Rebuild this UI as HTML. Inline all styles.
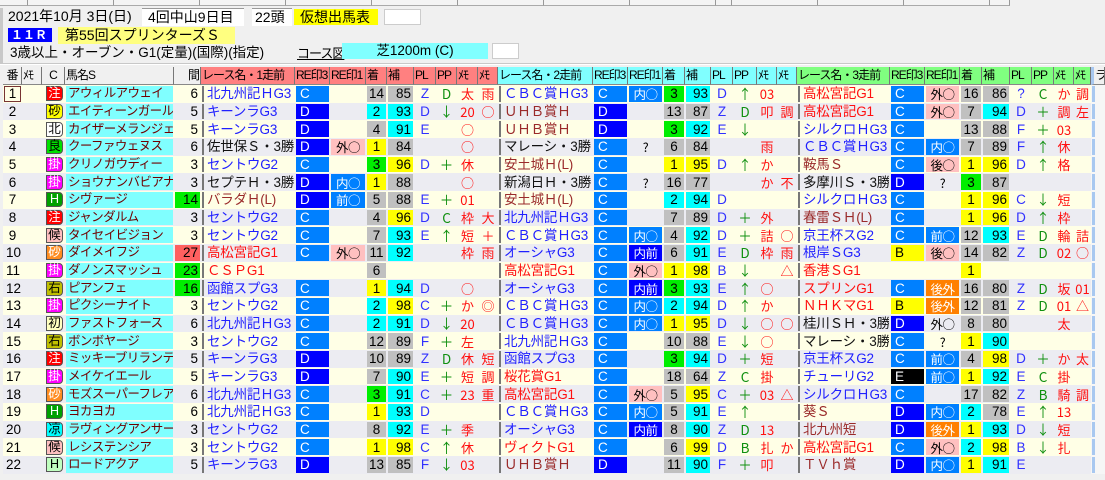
<!DOCTYPE html>
<html><head><meta charset="utf-8">
<style>
*{margin:0;padding:0;box-sizing:border-box}
body{width:1105px;height:480px;overflow:hidden;background:#f0f0f0;font-family:"Liberation Sans","Noto Sans CJK JP",sans-serif;font-size:13px;color:#000;position:relative}
.ab{position:absolute;white-space:nowrap;line-height:17px}
.tb{position:absolute;top:0;height:6px;border-right:1px solid #999;border-bottom:1px solid #aaa;background:#f4f4f4}
table{position:absolute;left:3px;top:67px;border-collapse:separate;border-spacing:0;table-layout:fixed;width:1102px}
td{border:1px solid transparent;background-clip:padding-box;padding:0 2px;white-space:nowrap;overflow:hidden;line-height:15px;font-size:13.5px;height:17.68px}
tr.h td{height:18px;border:0;border-right:1px solid #777;border-bottom:1px solid #888;background:#f0f0f0;font-size:12px;padding:0 1px;letter-spacing:-1px}
tr.h td.h1{background:#ff8080}tr.h td.h2{background:#80ffff}tr.h td.h3{background:#80ff80}
tr.o{background:#ffffe6}tr.e{background:#ececf2}
.ce{text-align:center}.r{text-align:right}
.nm{background-color:#80ffff;color:#700000;font-size:12.5px;letter-spacing:-0.6px}
.rn{box-shadow:inset 2px 0 #777;padding-left:5px;letter-spacing:-0.2px}
.bl{color:#2020ff}.rd{color:#ff1010}.br{color:#9a2a2a}.bk{color:#111}
.c0{background-color:#0080ff;color:#fff;padding-left:4px}
.d0{background-color:#0000ff;color:#fff;padding-left:4px}
.b0{background-color:#ffff00;padding-left:4px}
.e0{background-color:#000;color:#fff;padding-left:4px}
.po,.lb,.db,.or,.q{font-family:"Noto Sans CJK JP",sans-serif;font-size:12.5px;letter-spacing:-0.5px;padding:0}
.po{background-color:#ffc0c0;text-align:center}
.lb{background-color:#0080ff;color:#fff;text-align:center}
.db{background-color:#0000ff;color:#fff;text-align:center}
.or{background-color:#ff8000;color:#fff;text-align:center}
.q{text-align:center}
.y{background-color:#ffff00}.cy{background-color:#00ffff}.g{background-color:#00ee00}.gr{background-color:#c0c0c0}.rr{background-color:#ff6060}
.pl{color:#3030ff;text-align:center}.pp{color:#109010;text-align:center;font-family:"Noto Sans CJK JP",sans-serif}.m{color:#ff1010;text-align:center;font-family:"Noto Sans CJK JP",sans-serif;font-size:13px;padding:0}
.mk{display:inline-block;width:17px;height:15px;border:1px solid #555;border-radius:0 4px 4px 0;text-align:center;line-height:13px;font-size:12.5px;vertical-align:top;margin-left:1px}
.last{background:#f6f6f6;box-shadow:inset 3px 0 #a8c8f0}
</style></head><body>
<div class="tb" style="left:0;width:28px"></div><div class="tb" style="left:28px;width:86px"></div><div class="tb" style="left:114px;width:86px"></div><div class="tb" style="left:200px;width:86px"></div><div class="tb" style="left:286px;width:86px"></div><div class="tb" style="left:372px;width:86px"></div><div class="tb" style="left:458px;width:86px"></div><div class="tb" style="left:544px;width:86px"></div><div class="tb" style="left:630px;width:86px"></div><div class="tb" style="left:716px;width:16px"></div><div class="tb" style="left:732px;width:86px"></div><div class="tb" style="left:818px;width:86px"></div><div class="tb" style="left:904px;width:86px"></div><div class="tb" style="left:990px;width:20px"></div>
<div style="position:absolute;left:0;top:8px;width:3px;height:55px;background:#c8c8c8"></div>
<div class="ab" style="left:8px;top:8px;font-size:14px">2021年10月 3日(日)</div>
<div class="ab" style="left:142px;top:8px;width:102px;height:18px;background:#fff;border-top:1px solid #999;padding-left:6px;font-size:14px">4回中山9日目</div>
<div class="ab" style="left:252px;top:8px;width:40px;height:18px;background:#fff;border-top:1px solid #999;padding-left:3px;font-size:14px">22頭</div>
<div class="ab" style="left:294px;top:9px;width:84px;height:16px;background:#ffff00;padding-left:6px;font-size:14px">仮想出馬表</div>
<div class="ab" style="left:384px;top:9px;width:37px;height:16px;background:#fff;border:1px solid #ccc"></div>
<div class="ab" style="left:8px;top:28px;width:44px;height:14px;background:#0000ff;color:#fff;font-size:12px;line-height:14px;letter-spacing:0;padding-left:3px;font-weight:bold">１１Ｒ</div>
<div class="ab" style="left:58px;top:27px;width:177px;height:17px;background:#ffff80;padding-left:7px;font-size:14px">第55回スプリンターズＳ</div>
<div class="ab" style="left:10px;top:44px;font-size:13.5px">3歳以上・オーブン・G1(定量)(国際)(指定)</div>
<div class="ab" style="left:297px;top:45px;font-size:13px;text-decoration:underline;letter-spacing:-1px">コース図</div>
<div class="ab" style="left:342px;top:43px;width:146px;height:16px;background:#80ffff;text-align:center;font-size:13.5px;line-height:16px">芝1200m (C)</div>
<div class="ab" style="left:492px;top:43px;width:27px;height:16px;background:#fff;border:1px solid #ccc"></div>
<div style="position:absolute;left:0;top:63px;width:1105px;height:2px;background:#c8c8c8;border-bottom:1px solid #fff"></div>
<table>
<colgroup><col style="width:19px"><col style="width:20px"><col style="width:23px"><col style="width:109px"><col style="width:27px">
<col style="width:94px"><col style="width:35px"><col style="width:36px"><col style="width:21px"><col style="width:27px"><col style="width:22px"><col style="width:21px"><col style="width:21px"><col style="width:20px">
<col style="width:95px"><col style="width:35px"><col style="width:35px"><col style="width:22px"><col style="width:26px"><col style="width:22px"><col style="width:24px"><col style="width:20px"><col style="width:20px">
<col style="width:93px"><col style="width:35px"><col style="width:35px"><col style="width:22px"><col style="width:28px"><col style="width:22px"><col style="width:22px"><col style="width:20px"><col style="width:17px">
<col style="width:14px"></colgroup>
<tr class="h"><td class="ce">番</td><td>ﾒﾓ</td><td class="ce">C</td><td>馬名S</td><td class="r">間</td>
<td class="h1">レース名・1走前</td><td class="h1">RE印3</td><td class="h1">RE印1</td><td class="h1">着</td><td class="h1">補</td><td class="h1">PL</td><td class="h1">PP</td><td class="h1">ﾒﾓ</td><td class="h1">ﾒﾓ</td>
<td class="h2">レース名・2走前</td><td class="h2">RE印3</td><td class="h2">RE印1</td><td class="h2">着</td><td class="h2">補</td><td class="h2">PL</td><td class="h2">PP</td><td class="h2">ﾒﾓ</td><td class="h2">ﾒﾓ</td>
<td class="h3">レース名・3走前</td><td class="h3">RE印3</td><td class="h3">RE印1</td><td class="h3">着</td><td class="h3">補</td><td class="h3">PL</td><td class="h3">PP</td><td class="h3">ﾒﾓ</td><td class="h3">ﾒﾓ</td><td style="border-left:3px solid #a8c8f0">ラ</td></tr>

<tr class="o"><td class="ce" style="outline:1px solid #733;outline-offset:-2px">1</td><td></td><td><span class="mk" style="background:#f00;color:#fff">注</span></td><td class="nm">アウィルアウェイ</td><td class="r">6</td>
<td class="rn bl">北九州記ＨG3</td><td class="c0">C</td><td></td><td class="gr ce">14</td><td class="gr r">85</td><td class="pl">Z</td><td class="pp">D</td><td class="m">太</td><td class="m">雨</td>
<td class="rn bl">ＣＢＣ賞ＨG3</td><td class="c0">C</td><td class="lb">内○</td><td class="g ce">3</td><td class="cy r">93</td><td class="pl">D</td><td class="pp">↑</td><td class="m">03</td><td class="m"></td>
<td class="rn rd">高松宮記G1</td><td class="c0">C</td><td class="po">外○</td><td class="gr ce">16</td><td class="gr r">86</td><td class="pl">?</td><td class="pp">C</td><td class="m">か</td><td class="m">調</td><td class="last"></td></tr>

<tr class="e"><td class="ce">2</td><td></td><td><span class="mk" style="background:#ff0">砂</span></td><td class="nm">エイティーンガール</td><td class="r">5</td>
<td class="rn bl">キーンラG3</td><td class="d0">D</td><td></td><td class="cy ce">2</td><td class="cy r">93</td><td class="pl">D</td><td class="pp">↓</td><td class="m">20</td><td class="m">○</td>
<td class="rn br">ＵＨＢ賞Ｈ</td><td class="d0">D</td><td></td><td class="gr ce">13</td><td class="gr r">87</td><td class="pl">Z</td><td class="pp">D</td><td class="m">叩</td><td class="m">調</td>
<td class="rn rd">高松宮記G1</td><td class="c0">C</td><td class="po">外○</td><td class="gr ce">7</td><td class="cy r">94</td><td class="pl">D</td><td class="pp">＋</td><td class="m">調</td><td class="m">左</td><td class="last"></td></tr>

<tr class="o"><td class="ce">3</td><td></td><td><span class="mk" style="background:#fff">北</span></td><td class="nm">カイザーメランジェ</td><td class="r">5</td>
<td class="rn bl">キーンラG3</td><td class="d0">D</td><td></td><td class="gr ce">4</td><td class="cy r">91</td><td class="pl">E</td><td class="pp"></td><td class="m">○</td><td class="m"></td>
<td class="rn br">ＵＨＢ賞Ｈ</td><td class="d0">D</td><td></td><td class="g ce">3</td><td class="cy r">92</td><td class="pl">E</td><td class="pp">↓</td><td class="m"></td><td class="m"></td>
<td class="rn bl">シルクロＨG3</td><td class="c0">C</td><td></td><td class="gr ce">13</td><td class="gr r">88</td><td class="pl">F</td><td class="pp">＋</td><td class="m">03</td><td class="m"></td><td class="last"></td></tr>

<tr class="e"><td class="ce">4</td><td></td><td><span class="mk" style="background:#00e000">良</span></td><td class="nm">クーファウェヌス</td><td class="r">6</td>
<td class="rn bk">佐世保Ｓ・3勝</td><td class="d0">D</td><td class="po">外○</td><td class="y ce">1</td><td class="gr r">84</td><td class="pl"></td><td class="pp"></td><td class="m">○</td><td class="m"></td>
<td class="rn bk">マレーシ・3勝</td><td class="c0">C</td><td class="q">?</td><td class="gr ce">6</td><td class="gr r">84</td><td class="pl"></td><td class="pp"></td><td class="m">雨</td><td class="m"></td>
<td class="rn bl">ＣＢＣ賞ＨG3</td><td class="c0">C</td><td class="lb">内○</td><td class="gr ce">7</td><td class="gr r">89</td><td class="pl">F</td><td class="pp">↑</td><td class="m">休</td><td class="m"></td><td class="last"></td></tr>

<tr class="o"><td class="ce">5</td><td></td><td><span class="mk" style="background:#f0f;color:#fff">掛</span></td><td class="nm">クリノガウディー</td><td class="r">3</td>
<td class="rn bl">セントウG2</td><td class="c0">C</td><td></td><td class="g ce">3</td><td class="y r">96</td><td class="pl">D</td><td class="pp">＋</td><td class="m">休</td><td class="m"></td>
<td class="rn br">安土城Ｈ(L)</td><td class="c0">C</td><td></td><td class="y ce">1</td><td class="y r">95</td><td class="pl">D</td><td class="pp">↑</td><td class="m">か</td><td class="m"></td>
<td class="rn br">鞍馬Ｓ</td><td class="c0">C</td><td class="po">後○</td><td class="y ce">1</td><td class="y r">96</td><td class="pl">D</td><td class="pp">↑</td><td class="m">格</td><td class="m"></td><td class="last"></td></tr>

<tr class="e"><td class="ce">6</td><td></td><td><span class="mk" style="background:#f0f;color:#fff">掛</span></td><td class="nm">ショウナンバビアナ</td><td class="r">3</td>
<td class="rn bk">セプテＨ・3勝</td><td class="d0">D</td><td class="lb">内○</td><td class="y ce">1</td><td class="gr r">88</td><td class="pl"></td><td class="pp"></td><td class="m">○</td><td class="m"></td>
<td class="rn bk">新潟日Ｈ・3勝</td><td class="c0">C</td><td class="q">?</td><td class="gr ce">16</td><td class="gr r">77</td><td class="pl"></td><td class="pp"></td><td class="m">か</td><td class="m">不</td>
<td class="rn bk">多摩川Ｓ・3勝</td><td class="d0">D</td><td class="q">?</td><td class="g ce">3</td><td class="gr r">87</td><td class="pl"></td><td class="pp"></td><td class="m"></td><td class="m"></td><td class="last"></td></tr>

<tr class="o"><td class="ce">7</td><td></td><td><span class="mk" style="background:#00a000;color:#fff">H</span></td><td class="nm">シヴァージ</td><td class="r g">14</td>
<td class="rn br">バラダＨ(L)</td><td class="d0">D</td><td class="lb">前○</td><td class="gr ce">5</td><td class="gr r">88</td><td class="pl">E</td><td class="pp">＋</td><td class="m">01</td><td class="m"></td>
<td class="rn br">安土城Ｈ(L)</td><td class="c0">C</td><td></td><td class="cy ce">2</td><td class="cy r">94</td><td class="pl">D</td><td class="pp"></td><td class="m"></td><td class="m"></td>
<td class="rn bl">シルクロＨG3</td><td class="c0">C</td><td></td><td class="y ce">1</td><td class="y r">96</td><td class="pl">C</td><td class="pp">↓</td><td class="m">短</td><td class="m"></td><td class="last"></td></tr>

<tr class="e"><td class="ce">8</td><td></td><td><span class="mk" style="background:#f00;color:#fff">注</span></td><td class="nm">ジャンダルム</td><td class="r">3</td>
<td class="rn bl">セントウG2</td><td class="c0">C</td><td></td><td class="gr ce">4</td><td class="y r">96</td><td class="pl">D</td><td class="pp">C</td><td class="m">枠</td><td class="m">大</td>
<td class="rn bl">北九州記ＨG3</td><td class="c0">C</td><td></td><td class="gr ce">7</td><td class="gr r">89</td><td class="pl">D</td><td class="pp">＋</td><td class="m">外</td><td class="m"></td>
<td class="rn br">春雷ＳＨ(L)</td><td class="c0">C</td><td></td><td class="y ce">1</td><td class="y r">96</td><td class="pl">D</td><td class="pp">↑</td><td class="m">枠</td><td class="m"></td><td class="last"></td></tr>

<tr class="o"><td class="ce">9</td><td></td><td><span class="mk" style="background:#ffc0c0">候</span></td><td class="nm">タイセイビジョン</td><td class="r">3</td>
<td class="rn bl">セントウG2</td><td class="c0">C</td><td></td><td class="gr ce">7</td><td class="cy r">93</td><td class="pl">E</td><td class="pp">↑</td><td class="m">短</td><td class="m">＋</td>
<td class="rn bl">ＣＢＣ賞ＨG3</td><td class="c0">C</td><td class="lb">内○</td><td class="gr ce">4</td><td class="cy r">92</td><td class="pl">D</td><td class="pp">＋</td><td class="m">詰</td><td class="m">○</td>
<td class="rn bl">京王杯スG2</td><td class="c0">C</td><td class="lb">前○</td><td class="gr ce">12</td><td class="cy r">93</td><td class="pl">E</td><td class="pp">D</td><td class="m">輪</td><td class="m">詰</td><td class="last"></td></tr>

<tr class="e"><td class="ce">10</td><td></td><td><span class="mk" style="background:#ff8c20;color:#fff">砂</span></td><td class="nm">ダイメイフジ</td><td class="r rr">27</td>
<td class="rn rd">高松宮記G1</td><td class="c0">C</td><td class="po">外○</td><td class="gr ce">11</td><td class="cy r">92</td><td class="pl"></td><td class="pp"></td><td class="m">枠</td><td class="m">雨</td>
<td class="rn bl">オーシャG3</td><td class="c0">C</td><td class="db">内前</td><td class="gr ce">6</td><td class="cy r">91</td><td class="pl">E</td><td class="pp">D</td><td class="m">枠</td><td class="m">雨</td>
<td class="rn bl">根岸ＳG3</td><td class="b0">B</td><td class="po">後○</td><td class="gr ce">14</td><td class="gr r">82</td><td class="pl">Z</td><td class="pp">D</td><td class="m">02</td><td class="m">○</td><td class="last"></td></tr>

<tr class="o"><td class="ce">11</td><td></td><td><span class="mk" style="background:#f0f;color:#fff">掛</span></td><td class="nm">ダノンスマッシュ</td><td class="r g">23</td>
<td class="rn rd">ＣＳＰG1</td><td></td><td></td><td class="gr ce">6</td><td></td><td class="pl"></td><td class="pp"></td><td class="m"></td><td class="m"></td>
<td class="rn rd">高松宮記G1</td><td class="c0">C</td><td class="po">外○</td><td class="y ce">1</td><td class="y r">98</td><td class="pl">B</td><td class="pp">↓</td><td class="m"></td><td class="m">△</td>
<td class="rn rd">香港ＳG1</td><td></td><td></td><td class="y ce">1</td><td></td><td class="pl"></td><td class="pp"></td><td class="m"></td><td class="m"></td><td class="last"></td></tr>

<tr class="e"><td class="ce">12</td><td></td><td><span class="mk" style="background:#c0c000">右</span></td><td class="nm">ピアンフェ</td><td class="r g">16</td>
<td class="rn bl">函館スプG3</td><td class="c0">C</td><td></td><td class="y ce">1</td><td class="cy r">94</td><td class="pl">D</td><td class="pp"></td><td class="m">○</td><td class="m"></td>
<td class="rn bl">オーシャG3</td><td class="c0">C</td><td class="db">内前</td><td class="g ce">3</td><td class="cy r">93</td><td class="pl">E</td><td class="pp">↑</td><td class="m">○</td><td class="m"></td>
<td class="rn rd">スプリンG1</td><td class="c0">C</td><td class="or">後外</td><td class="gr ce">16</td><td class="gr r">80</td><td class="pl">Z</td><td class="pp">D</td><td class="m">坂</td><td class="m">01</td><td class="last"></td></tr>

<tr class="o"><td class="ce">13</td><td></td><td><span class="mk" style="background:#f0f;color:#fff">掛</span></td><td class="nm">ピクシーナイト</td><td class="r">3</td>
<td class="rn bl">セントウG2</td><td class="c0">C</td><td></td><td class="cy ce">2</td><td class="y r">98</td><td class="pl">C</td><td class="pp">＋</td><td class="m">か</td><td class="m">◎</td>
<td class="rn bl">ＣＢＣ賞ＨG3</td><td class="c0">C</td><td class="lb">内○</td><td class="cy ce">2</td><td class="cy r">94</td><td class="pl">D</td><td class="pp">↑</td><td class="m">か</td><td class="m"></td>
<td class="rn rd">ＮＨＫマG1</td><td class="b0">B</td><td class="or">後外</td><td class="gr ce">12</td><td class="gr r">81</td><td class="pl">Z</td><td class="pp">D</td><td class="m">01</td><td class="m">△</td><td class="last"></td></tr>

<tr class="e"><td class="ce">14</td><td></td><td><span class="mk" style="background:#ffffc0">初</span></td><td class="nm">ファストフォース</td><td class="r">6</td>
<td class="rn bl">北九州記ＨG3</td><td class="c0">C</td><td></td><td class="cy ce">2</td><td class="cy r">91</td><td class="pl">D</td><td class="pp">↓</td><td class="m">20</td><td class="m"></td>
<td class="rn bl">ＣＢＣ賞ＨG3</td><td class="c0">C</td><td class="lb">内○</td><td class="y ce">1</td><td class="y r">95</td><td class="pl">D</td><td class="pp">↓</td><td class="m">○</td><td class="m">○</td>
<td class="rn bk">桂川ＳＨ・3勝</td><td class="d0">D</td><td class="q">外○</td><td class="gr ce">8</td><td class="gr r">80</td><td class="pl"></td><td class="pp"></td><td class="m">太</td><td class="m"></td><td class="last"></td></tr>

<tr class="o"><td class="ce">15</td><td></td><td><span class="mk" style="background:#c0c000">右</span></td><td class="nm">ボンボヤージ</td><td class="r">3</td>
<td class="rn bl">セントウG2</td><td class="c0">C</td><td></td><td class="gr ce">12</td><td class="gr r">89</td><td class="pl">F</td><td class="pp">＋</td><td class="m">左</td><td class="m"></td>
<td class="rn bl">北九州記ＨG3</td><td class="c0">C</td><td></td><td class="gr ce">10</td><td class="gr r">88</td><td class="pl">E</td><td class="pp">↓</td><td class="m">○</td><td class="m"></td>
<td class="rn bk">マレーシ・3勝</td><td class="c0">C</td><td class="q">?</td><td class="y ce">1</td><td class="cy r">90</td><td class="pl"></td><td class="pp"></td><td class="m"></td><td class="m"></td><td class="last"></td></tr>

<tr class="e"><td class="ce">16</td><td></td><td><span class="mk" style="background:#f00;color:#fff">注</span></td><td class="nm">ミッキーブリランテ</td><td class="r">5</td>
<td class="rn bl">キーンラG3</td><td class="d0">D</td><td></td><td class="gr ce">10</td><td class="gr r">89</td><td class="pl">Z</td><td class="pp">D</td><td class="m">休</td><td class="m">短</td>
<td class="rn bl">函館スプG3</td><td class="c0">C</td><td></td><td class="g ce">3</td><td class="cy r">94</td><td class="pl">D</td><td class="pp">＋</td><td class="m">短</td><td class="m"></td>
<td class="rn bl">京王杯スG2</td><td class="c0">C</td><td class="lb">前○</td><td class="gr ce">4</td><td class="y r">98</td><td class="pl">D</td><td class="pp">＋</td><td class="m">か</td><td class="m">太</td><td class="last"></td></tr>

<tr class="o"><td class="ce">17</td><td></td><td><span class="mk" style="background:#f0f;color:#fff">掛</span></td><td class="nm">メイケイエール</td><td class="r">5</td>
<td class="rn bl">キーンラG3</td><td class="d0">D</td><td></td><td class="gr ce">7</td><td class="cy r">90</td><td class="pl">E</td><td class="pp">＋</td><td class="m">短</td><td class="m">調</td>
<td class="rn rd">桜花賞G1</td><td class="c0">C</td><td></td><td class="gr ce">18</td><td class="gr r">64</td><td class="pl">Z</td><td class="pp">C</td><td class="m">掛</td><td class="m"></td>
<td class="rn bl">チューリG2</td><td class="e0">E</td><td class="lb">前○</td><td class="y ce">1</td><td class="cy r">92</td><td class="pl">E</td><td class="pp">C</td><td class="m">掛</td><td class="m"></td><td class="last"></td></tr>

<tr class="e"><td class="ce">18</td><td></td><td><span class="mk" style="background:#ff8c20;color:#fff">砂</span></td><td class="nm">モズスーパーフレア</td><td class="r">6</td>
<td class="rn bl">北九州記ＨG3</td><td class="c0">C</td><td></td><td class="g ce">3</td><td class="cy r">91</td><td class="pl">C</td><td class="pp">＋</td><td class="m">23</td><td class="m">重</td>
<td class="rn rd">高松宮記G1</td><td class="c0">C</td><td class="po">外○</td><td class="gr ce">5</td><td class="y r">95</td><td class="pl">C</td><td class="pp">＋</td><td class="m">03</td><td class="m">△</td>
<td class="rn bl">シルクロＨG3</td><td class="c0">C</td><td></td><td class="gr ce">17</td><td class="gr r">82</td><td class="pl">Z</td><td class="pp">B</td><td class="m">騎</td><td class="m">調</td><td class="last"></td></tr>

<tr class="o"><td class="ce">19</td><td></td><td><span class="mk" style="background:#00a000;color:#fff">H</span></td><td class="nm">ヨカヨカ</td><td class="r">6</td>
<td class="rn bl">北九州記ＨG3</td><td class="c0">C</td><td></td><td class="y ce">1</td><td class="cy r">93</td><td class="pl">D</td><td class="pp"></td><td class="m"></td><td class="m"></td>
<td class="rn bl">ＣＢＣ賞ＨG3</td><td class="c0">C</td><td class="lb">内○</td><td class="gr ce">5</td><td class="cy r">91</td><td class="pl">E</td><td class="pp">↑</td><td class="m"></td><td class="m"></td>
<td class="rn br">葵Ｓ</td><td class="d0">D</td><td class="lb">内○</td><td class="cy ce">2</td><td class="gr r">78</td><td class="pl">E</td><td class="pp">↑</td><td class="m">13</td><td class="m"></td><td class="last"></td></tr>

<tr class="e"><td class="ce">20</td><td></td><td><span class="mk" style="background:#0ff">凉</span></td><td class="nm">ラヴィングアンサー</td><td class="r">3</td>
<td class="rn bl">セントウG2</td><td class="c0">C</td><td></td><td class="gr ce">8</td><td class="cy r">92</td><td class="pl">E</td><td class="pp">＋</td><td class="m">季</td><td class="m"></td>
<td class="rn bl">オーシャG3</td><td class="c0">C</td><td class="db">内前</td><td class="gr ce">8</td><td class="cy r">90</td><td class="pl">Z</td><td class="pp">D</td><td class="m">13</td><td class="m"></td>
<td class="rn br">北九州短</td><td class="d0">D</td><td class="or">後外</td><td class="y ce">1</td><td class="cy r">93</td><td class="pl">D</td><td class="pp">↓</td><td class="m">短</td><td class="m"></td><td class="last"></td></tr>

<tr class="o"><td class="ce">21</td><td></td><td><span class="mk" style="background:#ffc0c0">候</span></td><td class="nm">レシステンシア</td><td class="r">3</td>
<td class="rn bl">セントウG2</td><td class="c0">C</td><td></td><td class="y ce">1</td><td class="y r">98</td><td class="pl">C</td><td class="pp">↑</td><td class="m">休</td><td class="m"></td>
<td class="rn rd">ヴィクトG1</td><td class="c0">C</td><td></td><td class="gr ce">6</td><td class="y r">99</td><td class="pl">D</td><td class="pp">B</td><td class="m">扎</td><td class="m">か</td>
<td class="rn rd">高松宮記G1</td><td class="c0">C</td><td class="po">外○</td><td class="cy ce">2</td><td class="y r">98</td><td class="pl">B</td><td class="pp">↓</td><td class="m">扎</td><td class="m"></td><td class="last"></td></tr>

<tr class="e"><td class="ce">22</td><td></td><td><span class="mk" style="background:#c0ffc0">H</span></td><td class="nm">ロードアクア</td><td class="r">5</td>
<td class="rn bl">キーンラG3</td><td class="d0">D</td><td></td><td class="gr ce">13</td><td class="gr r">85</td><td class="pl">F</td><td class="pp">↓</td><td class="m">03</td><td class="m"></td>
<td class="rn br">ＵＨＢ賞Ｈ</td><td class="d0">D</td><td></td><td class="gr ce">11</td><td class="cy r">90</td><td class="pl">F</td><td class="pp">＋</td><td class="m">叩</td><td class="m"></td>
<td class="rn br">ＴＶｈ賞</td><td class="d0">D</td><td class="lb">内○</td><td class="y ce">1</td><td class="cy r">91</td><td class="pl">E</td><td class="pp"></td><td class="m"></td><td class="m"></td><td class="last"></td></tr>
</table>
</body></html>
